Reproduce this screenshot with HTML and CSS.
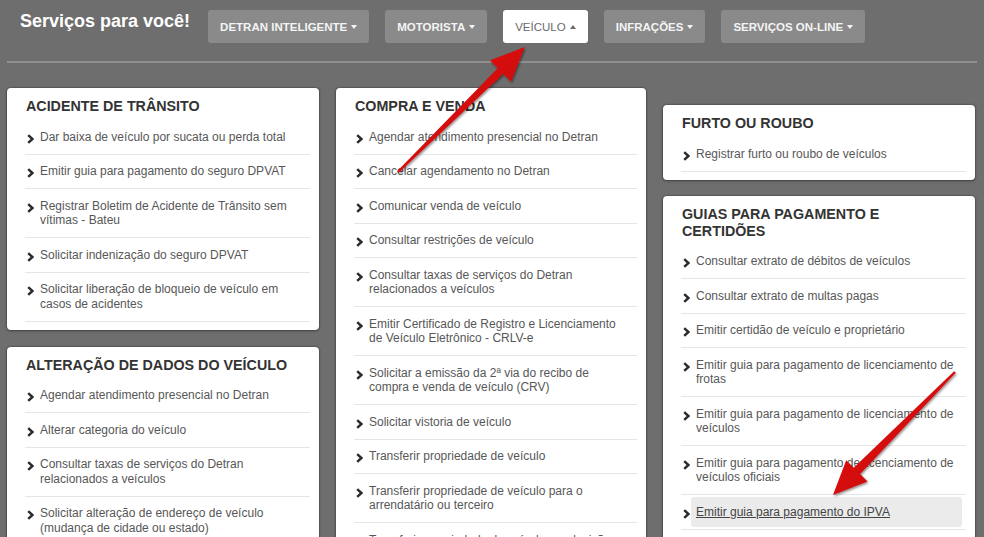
FILE: index.html
```html
<!DOCTYPE html>
<html lang="pt-BR">
<head>
<meta charset="utf-8">
<title>Serviços para você!</title>
<link rel="stylesheet" href="styles.css">
</head>
<body>
<header class="top">
  <h1 class="brand">Serviços para você!</h1>
  <nav class="menu">
    <a class="menu-btn" href="#">DETRAN INTELIGENTE <span class="caret"></span></a>
    <a class="menu-btn" href="#">MOTORISTA <span class="caret"></span></a>
    <a class="menu-btn active" href="#">VEÍCULO <span class="caret up"></span></a>
    <a class="menu-btn" href="#">INFRAÇÕES <span class="caret"></span></a>
    <a class="menu-btn" href="#">SERVIÇOS ON-LINE <span class="caret"></span></a>
  </nav>
</header>
<div class="rule"></div>

<main class="grid">
  <div class="col">
    <section class="card">
      <h2 class="card-title">ACIDENTE DE TRÂNSITO</h2>
      <ul class="list">
        <li><svg class="chev" viewBox="0 0 7 10"><path d="M1.2 1.2 L5.4 5 L1.2 8.8"/></svg><a href="#">Dar baixa de veículo por sucata ou perda total</a></li>
        <li><svg class="chev" viewBox="0 0 7 10"><path d="M1.2 1.2 L5.4 5 L1.2 8.8"/></svg><a href="#">Emitir guia para pagamento do seguro DPVAT</a></li>
        <li><svg class="chev" viewBox="0 0 7 10"><path d="M1.2 1.2 L5.4 5 L1.2 8.8"/></svg><a href="#">Registrar Boletim de Acidente de Trânsito sem vítimas - Bateu</a></li>
        <li><svg class="chev" viewBox="0 0 7 10"><path d="M1.2 1.2 L5.4 5 L1.2 8.8"/></svg><a href="#">Solicitar indenização do seguro DPVAT</a></li>
        <li><svg class="chev" viewBox="0 0 7 10"><path d="M1.2 1.2 L5.4 5 L1.2 8.8"/></svg><a href="#">Solicitar liberação de bloqueio de veículo em casos de acidentes</a></li>
      </ul>
    </section>
    <section class="card">
      <h2 class="card-title">ALTERAÇÃO DE DADOS DO VEÍCULO</h2>
      <ul class="list">
        <li><svg class="chev" viewBox="0 0 7 10"><path d="M1.2 1.2 L5.4 5 L1.2 8.8"/></svg><a href="#">Agendar atendimento presencial no Detran</a></li>
        <li><svg class="chev" viewBox="0 0 7 10"><path d="M1.2 1.2 L5.4 5 L1.2 8.8"/></svg><a href="#">Alterar categoria do veículo</a></li>
        <li><svg class="chev" viewBox="0 0 7 10"><path d="M1.2 1.2 L5.4 5 L1.2 8.8"/></svg><a href="#">Consultar taxas de serviços do Detran relacionados a veículos</a></li>
        <li><svg class="chev" viewBox="0 0 7 10"><path d="M1.2 1.2 L5.4 5 L1.2 8.8"/></svg><a href="#">Solicitar alteração de endereço de veículo (mudança de cidade ou estado)</a></li>
        <li><svg class="chev" viewBox="0 0 7 10"><path d="M1.2 1.2 L5.4 5 L1.2 8.8"/></svg><a href="#">Solicitar alteração de características do veículo</a></li>
      </ul>
    </section>
  </div>

  <div class="col">
    <section class="card">
      <h2 class="card-title">COMPRA E VENDA</h2>
      <ul class="list">
        <li><svg class="chev" viewBox="0 0 7 10"><path d="M1.2 1.2 L5.4 5 L1.2 8.8"/></svg><a href="#">Agendar atendimento presencial no Detran</a></li>
        <li><svg class="chev" viewBox="0 0 7 10"><path d="M1.2 1.2 L5.4 5 L1.2 8.8"/></svg><a href="#">Cancelar agendamento no Detran</a></li>
        <li><svg class="chev" viewBox="0 0 7 10"><path d="M1.2 1.2 L5.4 5 L1.2 8.8"/></svg><a href="#">Comunicar venda de veículo</a></li>
        <li><svg class="chev" viewBox="0 0 7 10"><path d="M1.2 1.2 L5.4 5 L1.2 8.8"/></svg><a href="#">Consultar restrições de veículo</a></li>
        <li><svg class="chev" viewBox="0 0 7 10"><path d="M1.2 1.2 L5.4 5 L1.2 8.8"/></svg><a href="#">Consultar taxas de serviços do Detran relacionados a veículos</a></li>
        <li><svg class="chev" viewBox="0 0 7 10"><path d="M1.2 1.2 L5.4 5 L1.2 8.8"/></svg><a href="#">Emitir Certificado de Registro e Licenciamento de Veículo Eletrônico - CRLV-e</a></li>
        <li><svg class="chev" viewBox="0 0 7 10"><path d="M1.2 1.2 L5.4 5 L1.2 8.8"/></svg><a href="#">Solicitar a emissão da 2ª via do recibo de compra e venda de veículo (CRV)</a></li>
        <li><svg class="chev" viewBox="0 0 7 10"><path d="M1.2 1.2 L5.4 5 L1.2 8.8"/></svg><a href="#">Solicitar vistoria de veículo</a></li>
        <li><svg class="chev" viewBox="0 0 7 10"><path d="M1.2 1.2 L5.4 5 L1.2 8.8"/></svg><a href="#">Transferir propriedade de veículo</a></li>
        <li><svg class="chev" viewBox="0 0 7 10"><path d="M1.2 1.2 L5.4 5 L1.2 8.8"/></svg><a href="#">Transferir propriedade de veículo para o arrendatário ou terceiro</a></li>
        <li><svg class="chev" viewBox="0 0 7 10"><path d="M1.2 1.2 L5.4 5 L1.2 8.8"/></svg><a href="#">Transferir propriedade de veículo por decisão judicial</a></li>
      </ul>
    </section>
  </div>

  <div class="col col-offset">
    <section class="card">
      <h2 class="card-title">FURTO OU ROUBO</h2>
      <ul class="list">
        <li><svg class="chev" viewBox="0 0 7 10"><path d="M1.2 1.2 L5.4 5 L1.2 8.8"/></svg><a href="#">Registrar furto ou roubo de veículos</a></li>
      </ul>
    </section>
    <section class="card">
      <h2 class="card-title">GUIAS PARA PAGAMENTO E CERTIDÕES</h2>
      <ul class="list">
        <li><svg class="chev" viewBox="0 0 7 10"><path d="M1.2 1.2 L5.4 5 L1.2 8.8"/></svg><a href="#">Consultar extrato de débitos de veículos</a></li>
        <li><svg class="chev" viewBox="0 0 7 10"><path d="M1.2 1.2 L5.4 5 L1.2 8.8"/></svg><a href="#">Consultar extrato de multas pagas</a></li>
        <li><svg class="chev" viewBox="0 0 7 10"><path d="M1.2 1.2 L5.4 5 L1.2 8.8"/></svg><a href="#">Emitir certidão de veículo e proprietário</a></li>
        <li><svg class="chev" viewBox="0 0 7 10"><path d="M1.2 1.2 L5.4 5 L1.2 8.8"/></svg><a href="#">Emitir guia para pagamento de licenciamento de frotas</a></li>
        <li><svg class="chev" viewBox="0 0 7 10"><path d="M1.2 1.2 L5.4 5 L1.2 8.8"/></svg><a href="#">Emitir guia para pagamento de licenciamento de veículos</a></li>
        <li><svg class="chev" viewBox="0 0 7 10"><path d="M1.2 1.2 L5.4 5 L1.2 8.8"/></svg><a href="#">Emitir guia para pagamento de licenciamento de veículos oficiais</a></li>
        <li><svg class="chev" viewBox="0 0 7 10"><path d="M1.2 1.2 L5.4 5 L1.2 8.8"/></svg><a class="hl" href="#">Emitir guia para pagamento do IPVA</a></li>
        <li><svg class="chev" viewBox="0 0 7 10"><path d="M1.2 1.2 L5.4 5 L1.2 8.8"/></svg><a href="#">Emitir guia para pagamento de taxas do Detran</a></li>
      </ul>
    </section>
  </div>
</main>

<svg class="arrows" viewBox="0 0 984 537" width="984" height="537">
  <defs>
    <linearGradient id="red" x1="0" y1="0" x2="1" y2="1">
      <stop offset="0" stop-color="#f01c1c"/>
      <stop offset="1" stop-color="#b80000"/>
    </linearGradient>
    <filter id="sh" x="-20%" y="-20%" width="140%" height="140%">
      <feDropShadow dx="1" dy="1.5" stdDeviation="1.2" flood-color="#000" flood-opacity="0.45"/>
    </filter>
  </defs>
  <polygon filter="url(#sh)" fill="url(#red)" points="397.15,171.15 497.7,68.2 489.9,60.3 524.7,47.1 511.1,81.7 503.3,73.8 398.85,172.85"/>
  <polygon filter="url(#sh)" fill="url(#red)" points="954.15,371.15 853.7,467.7 846.2,460.3 833,495 867.5,481.5 860.1,474.1 955.85,372.85"/>
</svg>
</body>
</html>
```

FILE: styles.css
```css
html, body {
  margin: 0;
  padding: 0;
  overflow: hidden;
}

body {
  position: relative;
  width: 984px;
  height: 537px;
  background: #6e6e6e;
  font-family: "Liberation Sans", Arial, Helvetica, sans-serif;
}

.top {
  display: flex;
  align-items: flex-start;
  padding: 10px 0 0 20px;
}

.brand {
  margin: 0 18px 0 0;
  font-size: 18px;
  line-height: 23px;
  font-weight: bold;
  color: #ffffff;
}

.menu {
  display: flex;
  gap: 16px;
}

.menu-btn {
  display: flex;
  align-items: center;
  gap: 4px;
  height: 33px;
  padding: 0 12px 0 12px;
  box-sizing: border-box;
  background: #8a8a8a;
  border-radius: 3px;
  color: #f4f4f4;
  font-size: 11.5px;
  font-weight: bold;
  text-decoration: none;
}

.menu-btn.active {
  background: #ffffff;
  color: #6a6a6a;
  font-weight: normal;
}

.caret {
  width: 0;
  height: 0;
  border-left: 3.5px solid transparent;
  border-right: 3.5px solid transparent;
  border-top: 4px solid #f4f4f4;
}

.caret.up {
  border-top: 0;
  border-bottom: 4px solid #6a6a6a;
}

.rule {
  height: 2px;
  margin: 18px 7px 0 7px;
  background: #8f8f8f;
}

.grid {
  display: grid;
  grid-template-columns: 312px 310px 312px;
  column-gap: 17px;
  padding: 0 0 0 7px;
  margin-top: 25px;
  align-items: start;
}

.col {
  display: flex;
  flex-direction: column;
  gap: 17px;
}

.col-offset {
  padding-top: 17px;
  gap: 16px;
}

.card {
  background: #ffffff;
  border-radius: 4px;
  box-shadow: 0 0 2px rgba(0, 0, 0, 0.55), 0 1px 3px rgba(0, 0, 0, 0.3);
  padding: 10px 9px 8px 18px;
}

.card-title {
  margin: 0 0 5px 0;
  padding-left: 1px;
  font-size: 14.3px;
  line-height: 17px;
  font-weight: bold;
  color: #333333;
}

.list {
  list-style: none;
  margin: 0;
  padding: 0;
}

.list li {
  display: flex;
  align-items: flex-start;
  padding: 2px 4px 2px 2px;
  border-bottom: 1px solid #e6e6e6;
}

.chev {
  flex: none;
  width: 7px;
  height: 10px;
  margin-top: 11.5px;
  margin-right: 1px;
}

.chev path {
  fill: none;
  stroke: #2a2a2a;
  stroke-width: 2.4;
}

.list a {
  display: block;
  flex: 1;
  padding: 7.5px 5px;
  font-size: 12px;
  line-height: 14.5px;
  color: #575757;
  text-decoration: none;
  border-radius: 3px;
}

.list a.hl {
  background: #ebebeb;
  color: #444444;
  text-decoration: underline;
}

.arrows {
  position: absolute;
  top: 0;
  left: 0;
  pointer-events: none;
}
```
